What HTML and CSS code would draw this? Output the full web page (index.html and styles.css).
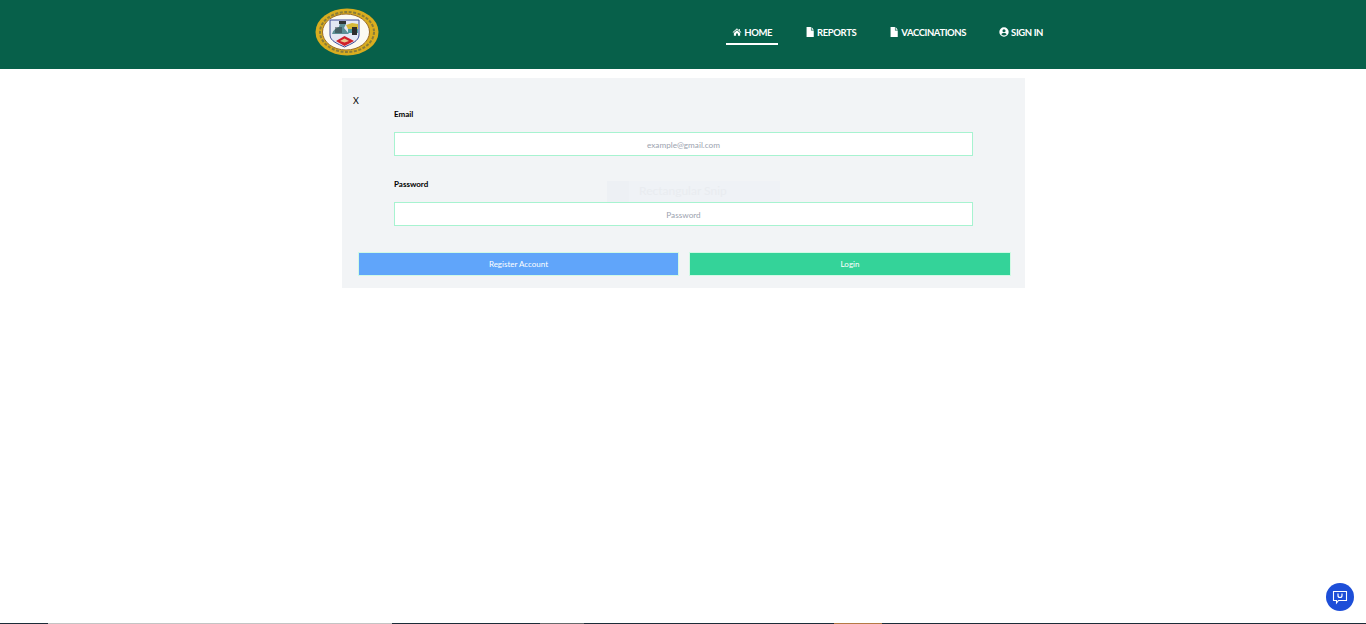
FILE: index.html
```html
<!DOCTYPE html>
<html lang="en">
<head>
    <meta charset="UTF-8">
    <meta name="viewport" content="width=device-width, initial-scale=1.0">
    <title>Sign In</title>
    <link rel="stylesheet" href="styles.css">
</head>
<body>
    <header class="top-bar">
        <div class="top-inner">
            <svg class="logo" viewBox="0 0 64 48" aria-label="Seal">
                <ellipse cx="32" cy="24" rx="31.500" ry="23.500" fill="#d9ad1f"/>
                <ellipse cx="32" cy="24" rx="27" ry="20" fill="none" stroke="#8a7c3a" stroke-width="2" stroke-dasharray="3 1.500"/>
                <ellipse cx="31" cy="24" rx="23.500" ry="18" fill="#fcfaf2" stroke="#9a6a24" stroke-width="1"/>
                <path d="M15 12h29v15c0 6-8 9-14.500 12C23 36 15 33 15 27z" fill="#e4e7f4" stroke="#3c4a96" stroke-width="1"/>
                <path d="M17 26c1-4 4-6 7-7l1-4 6 1-2 4 5 6H17z" fill="#5c8f96"/>
                <path d="M24 13h7v3h-7z" fill="#2f3336"/>
                <path d="M31 17l6-2 6 1v5H33z" fill="#d7b93a"/>
                <path d="M33 21h10v4H33z" fill="#4f9aa0"/>
                <path d="M37 19h5v8h-5z" fill="#2d2b2b"/>
                <path d="M21 33l8.500-5 9.500 5-9.500 5z" fill="#d0202a"/>
                <path d="M25 33l4.500-2.500L34 33l-4.500 1.500z" fill="#e9c88a"/>
                <path d="M20 19h7v6h-7z" fill="#2c3338" opacity=".5"/>
            </svg>
            <nav class="main-nav">
                <a class="nav-link active" href="#">
                    <svg class="nav-icon" viewBox="0 0 16 16"><path d="M8 2 1 8.200l.8.9L8 3.800l6.200 5.300.8-.9-2.500-2.100V3h-1.800v2.400zM3 9.500V14h3.500v-3.500h3V14H13V9.500L8 5.200z"/></svg>
                    HOME
                </a>
                <a class="nav-link" href="#">
                    <svg class="nav-icon" viewBox="0 0 16 16"><path d="M2.500 0h7v5.500H14V16H2.500zM10.500 0 14 4.500h-3.500z"/></svg>
                    REPORTS
                </a>
                <a class="nav-link" href="#">
                    <svg class="nav-icon" viewBox="0 0 16 16"><path d="M2.500 0h7v5.500H14V16H2.500zM10.500 0 14 4.500h-3.500z"/></svg>
                    VACCINATIONS
                </a>
                <a class="nav-link" href="#">
                    <svg class="nav-icon" viewBox="0 0 16 16"><path fill-rule="evenodd" d="M8 .5a7.500 7.500 0 1 0 0 15 7.500 7.500 0 0 0 0-15zm0 3a2.500 2.500 0 1 1 0 5 2.500 2.500 0 0 1 0-5zm0 10.200a5.800 5.800 0 0 1-4.300-2c.6-1.400 2.400-2.100 4.300-2.100s3.700.7 4.300 2.100a5.800 5.800 0 0 1-4.300 2z"/></svg>
                    SIGN IN
                </a>
            </nav>
        </div>
    </header>

    <main class="login-card">
        <div class="close-mark">X</div>
        <div class="form-fields">
            <label class="field-label" for="email">Email</label>
            <input class="field-input" id="email" type="text" placeholder="example@gmail.com">
            <label class="field-label second" for="password">Password</label>
            <input class="field-input" id="password" type="password" placeholder="Password">
        </div>
        <div class="snip-ghost"><span class="snip-icon"></span><span class="snip-text">Rectangular Snip</span></div>
        <div class="form-actions">
            <button class="action-button register">Register Account</button>
            <button class="action-button login">Login</button>
        </div>
    </main>

    <button class="feedback-button" aria-label="Feedback">
        <svg viewBox="0 0 16 16" width="16" height="16" fill="none" stroke="#fff" stroke-width="1.100"><path d="M1.500 2.500h13v9H6.500L4.500 14v-2.500h-3z"/><path d="M6 4.500v2a2 2 0 0 0 4 0v-2" stroke-width="1.200"/></svg>
    </button>

    <div class="taskbar-strip">
        <span class="strip dark narrow"></span>
        <span class="strip light"></span>
        <span class="strip dark middle"></span>
        <span class="strip grey"></span>
        <span class="strip dark long"></span>
        <span class="strip tan"></span>
        <span class="strip dark rest"></span>
    </div>
</body>
</html>
```

FILE: styles.css
```css
* {
    margin: 0;
    padding: 0;
    box-sizing: border-box;
}

body {
    font-family: 'Lato', 'Open Sans', sans-serif;
    background: #ffffff;
    color: #000000;
    height: 624px;
    overflow: hidden;
    position: relative;
}

.top-bar {
    background: #07604a;
    height: 69px;
}

.top-inner {
    width: 734px;
    margin-left: 315px;
    height: 100%;
    display: flex;
    align-items: flex-start;
    justify-content: space-between;
}

.logo {
    width: 64px;
    height: 48px;
    margin-top: 8px;
    filter: blur(0.6px);
}

.main-nav {
    display: flex;
    margin-top: 21px;
    gap: 21px;
}

.nav-link {
    display: flex;
    align-items: center;
    gap: 2px;
    height: 24px;
    padding: 0 6px;
    color: #ffffff;
    font-size: 9.500px;
    font-weight: 700;
    letter-spacing: -0.400px;
    text-decoration: none;
    border-bottom: 2px solid transparent;
}

.nav-link.active {
    border-bottom-color: #ffffff;
}

.nav-icon {
    width: 10px;
    height: 10px;
    fill: #ffffff;
}

.login-card {
    position: relative;
    width: 683px;
    height: 210px;
    margin: 9px 0 0 342px;
    background: #f2f4f6;
}

.close-mark {
    position: absolute;
    left: 11px;
    top: 16px;
    font-size: 9px;
    line-height: 14px;
}

.form-fields {
    position: relative;
    z-index: 1;
    padding: 30px 52px 0;
}

.field-label {
    display: block;
    font-size: 8px;
    font-weight: 700;
    line-height: 12px;
    height: 24px;
}

.field-label.second {
    margin-top: 22px;
}

.field-input {
    display: block;
    width: 579px;
    height: 24px;
    padding-top: 2px;
    background: #ffffff;
    border: 1px solid #a7f3d0;
    font-family: inherit;
    font-size: 8.200px;
    text-align: center;
    outline: none;
}

.field-input::placeholder {
    color: #9ca3af;
}

.snip-ghost {
    position: absolute;
    left: 265px;
    top: 103px;
    width: 173px;
    height: 21px;
    display: flex;
    background: #eff2f6;
}

.snip-icon {
    width: 22px;
    background: #edf0f4;
}

.snip-text {
    margin-left: 10px;
    font-size: 12px;
    line-height: 20px;
    color: #e9ecf0;
}

.form-actions {
    position: absolute;
    left: 16px;
    top: 174px;
    display: flex;
    gap: 10px;
}

.action-button {
    width: 321px;
    height: 24px;
    border: 1px solid #d1fae5;
    color: #ffffff;
    font-family: inherit;
    font-size: 8px;
}

.register {
    background: #60a5fa;
}

.login {
    width: 322px;
    background: #34d399;
}

.feedback-button {
    position: absolute;
    right: 12px;
    bottom: 13px;
    width: 28px;
    height: 28px;
    border: none;
    border-radius: 50%;
    background: #1d4ed8;
    display: flex;
    align-items: center;
    justify-content: center;
}

.taskbar-strip {
    position: absolute;
    left: 0;
    right: 0;
    bottom: 0;
    height: 1px;
    display: flex;
}

.strip.dark {
    background: #1c2c38;
}

.strip.narrow {
    width: 48px;
}

.strip.light {
    width: 344px;
    background: #c4c4c4;
}

.strip.middle {
    width: 148px;
}

.strip.grey {
    width: 44px;
    background: #666a6c;
}

.strip.long {
    width: 250px;
}

.strip.tan {
    width: 48px;
    background: #b47a45;
}

.strip.rest {
    flex: 1;
}
```
